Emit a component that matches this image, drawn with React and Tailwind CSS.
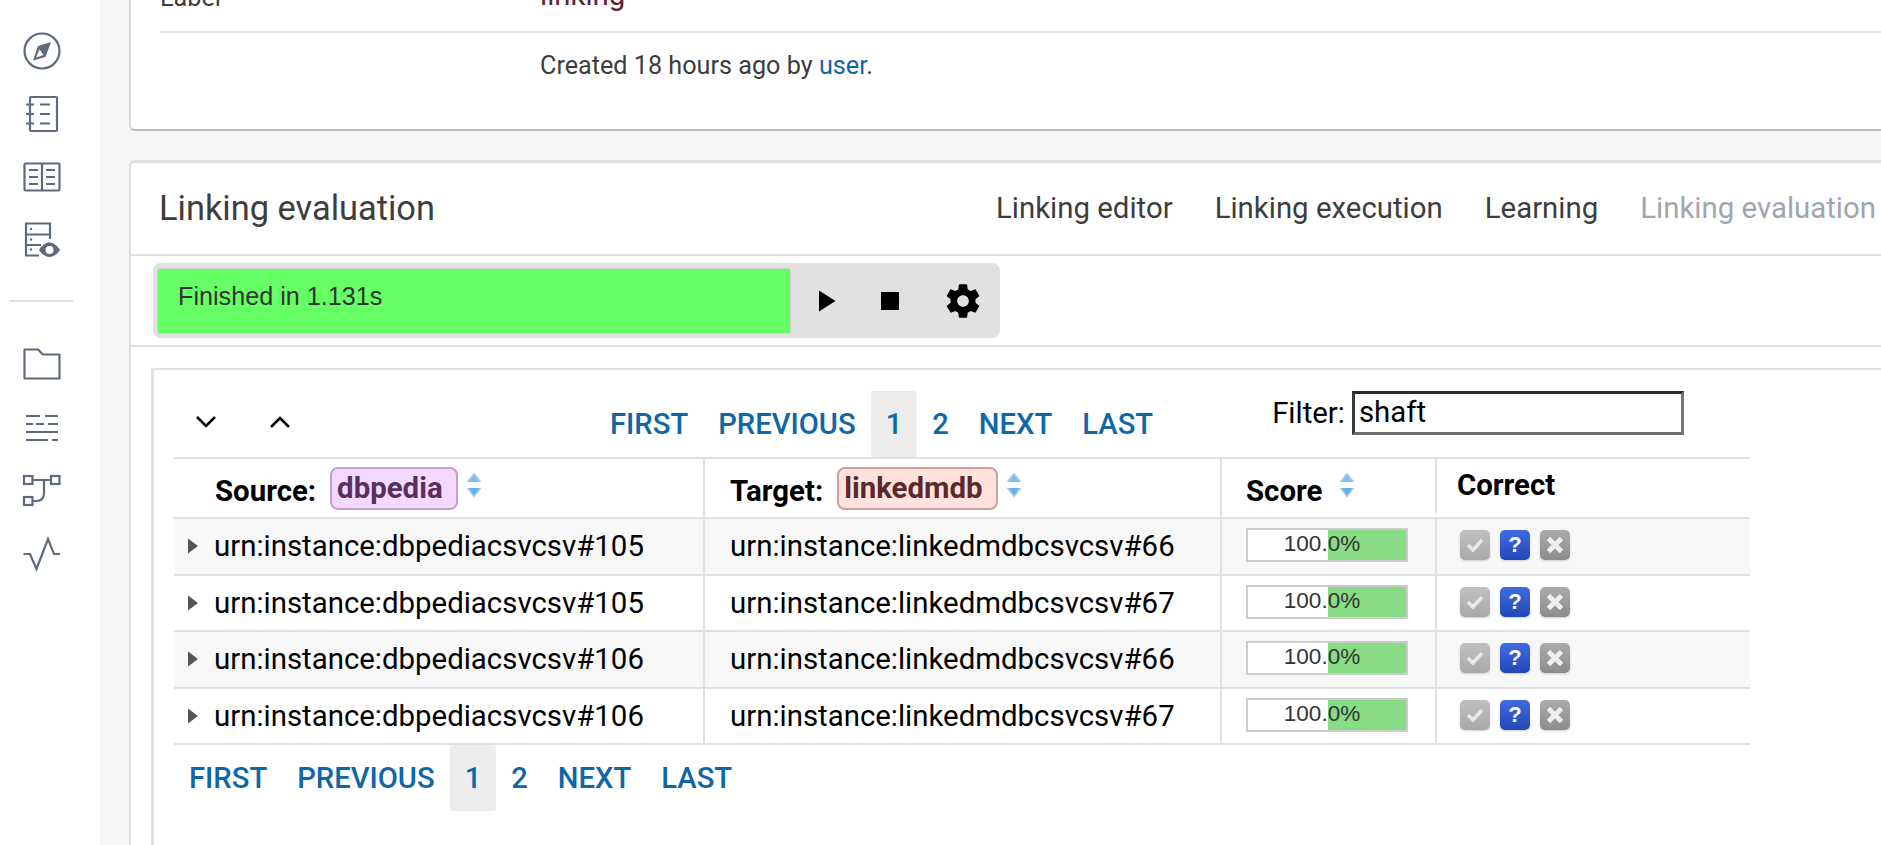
import React from "react";

const ICON = "#5f6b7c";

// sidebar icons are drawn in page coordinates, hence the odd viewBoxes
const SideIcon = ({ box, children }) => (
  <svg
    width="40"
    height="40"
    viewBox={box}
    fill="none"
    stroke={ICON}
    strokeWidth="2.2"
    className="block"
  >
    {children}
  </svg>
);

const SortIcon = () => (
  <svg width="16" height="26" viewBox="0 0 16 26" className="blur-[0.5px]">
    <path d="M8 0.5 L15.500 10 L0.500 10 Z" fill="#a9c6dc" />
    <path d="M8 3 L13 10 L3 10 Z" fill="#7cc0f5" />
    <path d="M0.500 16 H15.500 L8 25.500 Z" fill="#a9c6dc" />
    <path d="M3 16 H13 L8 23 Z" fill="#5fb2f2" />
  </svg>
);

const Caret = () => (
  <svg width="12" height="18" viewBox="0 0 12 18" className="shrink-0">
    <path d="M1 1.500 L11 9 L1 16.500 Z" fill="#555555" />
  </svg>
);

const Pager = ({ className }) => (
  <div
    className={`flex items-start text-[29.2px] font-medium leading-none text-[#0f67a5] ${className}`}
  >
    <span className="px-[15px] pt-[2px] h-[66px] flex items-center">FIRST</span>
    <span className="px-[15px] pt-[2px] h-[66px] flex items-center">PREVIOUS</span>
    <span className="px-[15px] pt-[2px] h-[66px] flex items-center bg-[#ececec] rounded-[3px]">1</span>
    <span className="px-[15px] pt-[2px] h-[66px] flex items-center">2</span>
    <span className="px-[15px] pt-[2px] h-[66px] flex items-center">NEXT</span>
    <span className="px-[15px] pt-[2px] h-[66px] flex items-center">LAST</span>
  </div>
);

const CorrectButtons = () => (
  <div className="flex gap-[10px] pl-[23px] mb-[2px]">
    <div className="w-[30px] h-[30px] rounded-[5px] bg-gradient-to-b from-[#c0c0c0] to-[#a8a8a8] shadow-[0_1px_2px_#ccc] flex items-center justify-center">
      <svg width="22" height="22" viewBox="0 0 22 22" fill="none">
        <path d="M4 11 L9 16 L18 6" stroke="#e8e8e8" strokeWidth="3.6" />
      </svg>
    </div>
    <div className="w-[30px] h-[30px] rounded-[5px] bg-gradient-to-b from-[#3f6be0] to-[#2347b8] shadow-[0_1px_2px_#ccc] flex items-center justify-center text-white text-[22px] font-bold leading-none font-['Liberation_Sans',sans-serif]">
      ?
    </div>
    <div className="w-[30px] h-[30px] rounded-[5px] bg-gradient-to-b from-[#ababab] to-[#8c8c8c] shadow-[0_1px_2px_#ccc] flex items-center justify-center">
      <svg width="24" height="24" viewBox="0 0 22 22" fill="none">
        <path d="M5 5 L17 17 M17 5 L5 17" stroke="#eeeeee" strokeWidth="4.4" />
      </svg>
    </div>
  </div>
);

const Row = ({ source, target, shaded }) => (
  <div
    className={`grid grid-cols-[529px_517px_215px_1fr] h-[56.5px] border-b-2 border-[#e0e0e0] text-[29.4px] text-black ${
      shaded ? "bg-[#f7f7f7]" : "bg-white"
    }`}
  >
    <div className="flex items-center pl-[13px]">
      <Caret />
      <span className="ml-[15px]">{source}</span>
    </div>
    <div className="flex items-center pl-[25px] border-l-2 border-[#e0e0e0]">{target}</div>
    <div className="flex items-center pl-[24px] border-l-2 border-[#e0e0e0]">
      <div className="relative w-[162px] h-[34px] mb-[2px] border-2 border-[#cccccc] bg-white">
        <div className="absolute top-0 bottom-0 left-[80px] right-0 bg-[#88dc85]" />
        <span className="absolute inset-0 flex items-center justify-center pr-[10px] pb-[2px] text-[22.5px] text-[#333] font-['Liberation_Sans',sans-serif]">
          100.0%
        </span>
      </div>
    </div>
    <div className="flex items-center border-l-2 border-[#e0e0e0]">
      <CorrectButtons />
    </div>
  </div>
);

const rows = [
  ["urn:instance:dbpediacsvcsv#105", "urn:instance:linkedmdbcsvcsv#66"],
  ["urn:instance:dbpediacsvcsv#105", "urn:instance:linkedmdbcsvcsv#67"],
  ["urn:instance:dbpediacsvcsv#106", "urn:instance:linkedmdbcsvcsv#66"],
  ["urn:instance:dbpediacsvcsv#106", "urn:instance:linkedmdbcsvcsv#67"],
];

export default function App() {
  return (
    <div className="flex h-[845px] w-full overflow-hidden bg-[#f5f5f5] font-['Roboto',sans-serif] text-[#3d3d3d]">
      {/* sidebar */}
      <aside className="w-[100px] shrink-0 bg-white flex flex-col pl-[22px] pt-[31px]">
        <div className="flex flex-col gap-[23px]">
          <SideIcon box="22 31 40 40">
            <circle cx="42" cy="51" r="17.5" />
            <path d="M51 42 L45.5 57 L33 60.5 L38 46 Z" fill={ICON} stroke="none" />
            <path d="M36 57.500 L39.500 49.500 L43.500 55 Z" fill="#ffffff" stroke="none" />
          </SideIcon>
          <SideIcon box="22 94 40 40">
            <rect x="30" y="97" width="27" height="34" rx="1" />
            <path d="M26 104.5 H34 M26 114 H34 M26 123.5 H34 M40 104.5 H50 M40 114 H50 M40 123.5 H50" />
          </SideIcon>
          <SideIcon box="22 158 40 40">
            <rect x="24.5" y="164.5" width="35" height="27" rx="1" />
            <path d="M42 164 V192 M29 171 H38 M29 178 H38 M29 185 H38 M46 171 H55 M46 178 H55 M46 185 H55" />
          </SideIcon>
          <SideIcon box="22 221 40 40">
            <path d="M39 256.5 H26 V224.5 H50 V240 M26 235.5 H50 M26 246 H41" />
            <circle cx="31" cy="230" r="1.2" fill={ICON} stroke="none" />
            <circle cx="31" cy="240.5" r="1.2" fill={ICON} stroke="none" />
            <circle cx="31" cy="250.5" r="1.2" fill={ICON} stroke="none" />
            <path
              d="M39 251 C42 246 46 243.500 49.500 243.500 C53 243.500 57 246 60 251 C57 255.500 53 258 49.500 258 C46 258 42 255.500 39 251 Z M49.500 247 A4 4 0 1 0 49.500 255 A4 4 0 1 0 49.500 247 Z"
              fill={ICON}
              stroke="none"
              fillRule="evenodd"
            />
          </SideIcon>
        </div>
        <div className="h-[2px] w-[64px] -ml-[13px] bg-[#e0e0e0] mt-[40px] mb-[42px]" />
        <div className="flex flex-col gap-[23px]">
          <SideIcon box="22 345 40 40">
            <path d="M24.500 350.500 H38 L43 355.500 H59.500 V379.500 H24.500 Z" strokeLinejoin="round" />
          </SideIcon>
          <SideIcon box="22 408 40 40">
            <path d="M26 417 H40 M45 417 H58 M26 425 H33 M36 425 H44 M48 425 H58 M26 433 H58 M26 441 H48 M52 441 H58" />
          </SideIcon>
          <SideIcon box="22 471 40 40">
            <rect x="24" y="477" width="8.500" height="8" />
            <rect x="51" y="477" width="8.500" height="8" />
            <rect x="24" y="498" width="8.500" height="8" />
            <path d="M33 481 H51 M44 481 V494 Q44 502 36 502 H33" />
          </SideIcon>
          <SideIcon box="22 535 40 40">
            <path d="M23.500 556 H30 L36.500 571 L48 541 L54 556 H60" />
          </SideIcon>
        </div>
      </aside>

      {/* content */}
      <main className="flex-1 min-w-0 pl-[29px]">
        <section className="h-[131px] -mr-4 bg-white rounded-bl-[6px] border-l-2 border-b-2 border-l-[#d8d8d8] border-b-[#bdbdbd] pl-[29px] overflow-hidden">
          <div className="flex h-[33px] items-end border-b-2 border-[#e4e4e4]">
            <span className="w-[380px] pb-[21px] leading-none text-[25.2px]">Label</span>
            <span className="pb-[21px] leading-none text-[29.4px] text-[#5b2333]">linking</span>
          </div>
          <p className="pl-[380px] pt-[19px] text-[25.2px] leading-[28px]">
            Created 18 hours ago by <span className="text-[#0f67a5]">user</span>.
          </p>
        </section>

        <section className="mt-[29px] -mr-4 h-[720px] bg-white rounded-tl-[6px] border-l-2 border-t-[3px] border-[#dfdfdf]">
          <header className="flex items-center justify-between h-[93px] pl-[28px] pr-[21px] border-b-2 border-[#e0e0e0]">
            <h2 className="text-[34.4px] font-normal leading-none">Linking evaluation</h2>
            <nav className="flex gap-[42px] text-[29.4px] leading-none">
              <span>Linking editor</span>
              <span>Linking execution</span>
              <span>Learning</span>
              <span className="text-[#a0a6b0]">Linking evaluation</span>
            </nav>
          </header>

          <div className="h-[91px] border-b-2 border-[#e0e0e0] pl-[22px] pt-[7px]">
            <div className="flex items-center w-[847px] h-[75px] bg-[#e1e1e1] rounded-[8px]">
              <div className="ml-[4px] w-[634px] h-[66px] bg-[#66ff66] rounded-[3px] border border-[#cfcfcf] flex items-center pl-[20px] pb-[7px] text-[25.2px] text-[#333] font-['Liberation_Sans',sans-serif]">
                Finished in 1.131s
              </div>
              <svg width="36" height="36" viewBox="0 0 24 24" className="ml-[16px]" fill="#000">
                <path d="M8 5v14l11-7z" />
              </svg>
              <svg width="36" height="36" viewBox="0 0 24 24" className="ml-[29px]" fill="#000">
                <path d="M6 6h12v12H6z" />
              </svg>
              <svg width="40" height="40" viewBox="0 0 24 24" className="ml-[35px]" fill="#000">
                <path d="M19.43 12.98c.04-.32.07-.64.07-.98s-.03-.66-.07-.98l2.11-1.65c.19-.15.24-.42.12-.64l-2-3.46c-.12-.22-.39-.3-.61-.22l-2.49 1c-.52-.4-1.08-.73-1.69-.98l-.38-2.65C14.46 2.18 14.25 2 14 2h-4c-.25 0-.46.18-.49.42l-.38 2.65c-.61.25-1.17.59-1.69.98l-2.49-1c-.23-.09-.49 0-.61.22l-2 3.46c-.13.22-.07.49.12.64l2.11 1.65c-.04.32-.07.65-.07.98s.03.66.07.98l-2.11 1.65c-.19.15-.24.42-.12.64l2 3.46c.12.22.39.3.61.22l2.49-1c.52.4 1.08.73 1.69.98l.38 2.65c.03.24.24.42.49.42h4c.25 0 .46-.18.49-.42l.38-2.65c.61-.25 1.17-.59 1.69-.98l2.49 1c.23.09.49 0 .61-.22l2-3.46c.12-.22.07-.49-.12-.64l-2.11-1.65zM12 15.5c-1.93 0-3.5-1.57-3.5-3.5s1.57-3.5 3.5-3.5 3.5 1.57 3.5 3.5-1.57 3.5-3.5 3.5z" />
              </svg>
            </div>
          </div>

          <div className="ml-[20px] mt-[21px] h-[600px] bg-white border-l-[3px] border-t-2 border-[#e0e0e0] pl-[20px]">
            {/* toolbar over the table */}
            <div className="flex w-[1576px] h-[87px] pt-[21px]">
              <div className="flex items-center h-[66px] gap-[50px] pl-[20px] pb-[4px]">
                <svg width="24" height="16" viewBox="0 0 24 16" fill="none" stroke="#000" strokeWidth="2.6">
                  <path d="M3 3 L12 12 L21 3" />
                </svg>
                <svg width="24" height="16" viewBox="0 0 24 16" fill="none" stroke="#000" strokeWidth="2.6">
                  <path d="M3 13 L12 4 L21 13" />
                </svg>
              </div>
              <Pager className="ml-[303px]" />
              <div className="flex items-start ml-[104px] text-[29.4px] text-black">
                <span className="leading-[44px] mr-[7px]">Filter:</span>
                <div className="w-[332px] h-[44px] border-[3px] border-t-[#2b2b2b] border-l-[#3a3a3a] border-r-[#767676] border-b-[#6e6e6e] pl-[4px] leading-[36px]">
                  shaft
                </div>
              </div>
            </div>

            {/* table */}
            <div className="w-[1576px]">
              <div className="grid grid-cols-[529px_517px_215px_1fr] h-[62px] border-y-2 border-[#e0e0e0] text-[29.4px] font-bold text-black">
                <div className="flex items-center pl-[41px]">
                  <span className="pt-[6px]">Source:</span>
                  <span className="ml-[14px] h-[43px] pl-[5px] pr-[13px] flex items-center rounded-[8px] border-2 border-[#c79fca] bg-[#f3d9ff] text-[#5a2f5f]">
                    dbpedia
                  </span>
                  <span className="ml-[8px] -mt-[6px]"><SortIcon /></span>
                </div>
                <div className="flex items-center pl-[25px] border-l-2 border-[#e0e0e0]">
                  <span className="pt-[6px]">Target:</span>
                  <span className="ml-[14px] h-[43px] pl-[5px] pr-[13px] flex items-center rounded-[8px] border-2 border-[#cf9f9f] bg-[#ffe2dc] text-[#5a2a2a]">
                    linkedmdb
                  </span>
                  <span className="ml-[8px] -mt-[6px]"><SortIcon /></span>
                </div>
                <div className="flex items-center pl-[24px] border-l-2 border-[#e0e0e0]">
                  <span className="pt-[6px]">Score</span>
                  <span className="ml-[17px] -mt-[6px]"><SortIcon /></span>
                </div>
                <div className="relative flex items-start pl-[22px] pt-[11px]">
                  <span className="absolute left-0 top-0 h-[54px] w-[2px] bg-[#e0e0e0]" />
                  <span className="leading-[30px]">Correct</span>
                </div>
              </div>
              {rows.map((r, i) => (
                <Row key={i} source={r[0]} target={r[1]} shaded={i % 2 === 0} />
              ))}
            </div>
            <Pager />
          </div>
        </section>
      </main>
    </div>
  );
}
